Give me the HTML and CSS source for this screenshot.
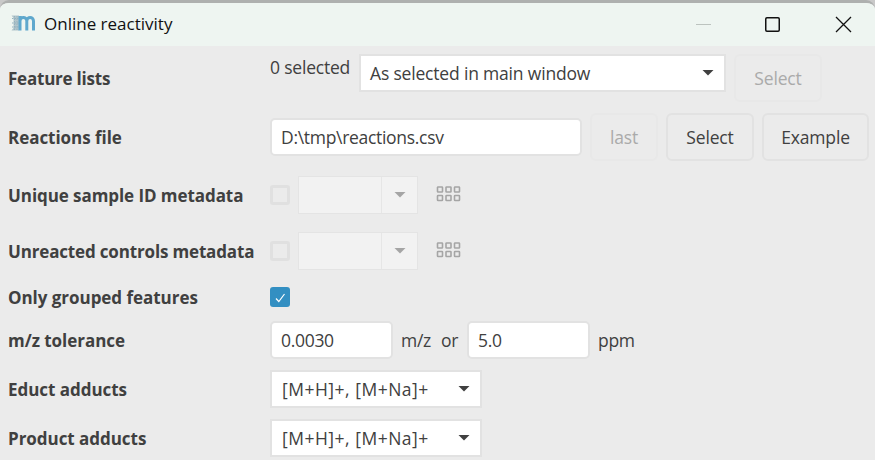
FILE: index.html
```html
<!DOCTYPE html>
<html lang="en">
<head>
<meta charset="utf-8">
<title>Online reactivity</title>
<link rel="stylesheet" href="styles.css">
</head>
<body>
<div class="window">
  <header class="titlebar">
    <svg class="logo" width="25" height="16" viewBox="0 0 25 16">
      <path d="M0.500 0.500H8V15.500H0.500L2.500 13V3Z" fill="#b2c5cb"/>
      <path d="M3.500 1v14M6 1v14M1 3.500h7M1 8h7M1 12h7" stroke="#95b2bf" stroke-width="1" stroke-dasharray="1.500 1" fill="none"/>
      <path d="M9 15.500V1M9 6C9 1.200 15.800 1.200 15.800 6V15.500M15.800 6C15.800 1.200 22.500 1.200 22.500 6V15.500" fill="none" stroke="#5fa8cd" stroke-width="3"/>
    </svg>
    <h1 class="title">Online reactivity</h1>
    <svg class="controls" width="160" height="20" viewBox="0 0 160 20" fill="none">
      <path d="M1 10.500h15" stroke="#bcc3bf"/>
      <rect x="70.750" y="3.750" width="13.500" height="13.500" rx="1.200" stroke="#111" stroke-width="1.500"/>
      <path d="M141 3l15 15M156 3L141 18" stroke="#111" stroke-width="1.300"/>
    </svg>
  </header>
  <main class="form">
    <div class="row row-lists">
      <label class="name">Feature lists</label>
      <span class="count">0 selected</span>
      <div class="combo combo-wide"><span class="t-main">As selected in main window</span><i class="arrow"></i></div>
      <button class="btn b-pick" disabled>Select</button>
    </div>
    <div class="row row-file">
      <label class="name n-loose">Reactions file</label>
      <div class="field field-file"><span class="t-file">D:\tmp\reactions.csv</span></div>
      <button class="btn b-last" disabled>last</button>
      <button class="btn b-select">Select</button>
      <button class="btn b-example">Example</button>
    </div>
    <div class="row row-sample">
      <label class="name n-sample">Unique sample ID metadata</label>
      <span class="check"></span>
      <div class="combo-off"><i class="arrow"></i></div>
      <svg class="tiles" width="25" height="16" viewBox="0 0 25 16"><g fill="none" stroke="#a5a5a5" stroke-width="1.600"><rect x="1.500" y="1" width="5" height="5" rx=".6"/><rect x="10" y="1" width="5" height="5" rx=".6"/><rect x="18.500" y="1" width="5" height="5" rx=".6"/><rect x="1.500" y="9.500" width="5" height="5" rx=".6"/><rect x="10" y="9.500" width="5" height="5" rx=".6"/><rect x="18.500" y="9.500" width="5" height="5" rx=".6"/></g></svg>
    </div>
    <div class="row row-control">
      <label class="name n-control">Unreacted controls metadata</label>
      <span class="check"></span>
      <div class="combo-off"><i class="arrow"></i></div>
      <svg class="tiles" width="25" height="16" viewBox="0 0 25 16"><g fill="none" stroke="#a5a5a5" stroke-width="1.600"><rect x="1.500" y="1" width="5" height="5" rx=".6"/><rect x="10" y="1" width="5" height="5" rx=".6"/><rect x="18.500" y="1" width="5" height="5" rx=".6"/><rect x="1.500" y="9.500" width="5" height="5" rx=".6"/><rect x="10" y="9.500" width="5" height="5" rx=".6"/><rect x="18.500" y="9.500" width="5" height="5" rx=".6"/></g></svg>
    </div>
    <div class="row row-grouped">
      <label class="name n-loose">Only grouped features</label>
      <span class="check check-on"><svg width="20" height="20" viewBox="0 0 20 20"><path d="M6 11.500l2.800 3L14.500 7" fill="none" stroke="#fff" stroke-width="1.200"/></svg></span>
    </div>
    <div class="row row-tolerance">
      <label class="name n-loose">m/z tolerance</label>
      <div class="field field-num"><span>0.0030</span></div>
      <span class="unit u-mz">m/z</span><span class="unit u-or">or</span>
      <div class="field field-num"><span>5.0</span></div>
      <span class="unit u-ppm">ppm</span>
    </div>
    <div class="row row-educt">
      <label class="name n-loose">Educt adducts</label>
      <div class="combo combo-add"><span class="t-add">[M+H]+, [M+Na]+</span><i class="arrow"></i></div>
    </div>
    <div class="row row-product">
      <label class="name n-loose">Product adducts</label>
      <div class="combo combo-add"><span class="t-add">[M+H]+, [M+Na]+</span><i class="arrow"></i></div>
    </div>
  </main>
</div>
</body>
</html>
```
FILE: styles.css
```css
* { box-sizing: border-box; }
body { margin: 0; background: #c9c9c9; color: #404040; font: 17.5px/24px "Open Sans", "Noto Sans", sans-serif; }
.window { height: 460px; overflow: hidden; border-top: 3px solid #aeb0af; border-radius: 9px 9px 0 0; background: #ebebeb; white-space: nowrap; }
.titlebar { display: flex; align-items: center; height: 43px; padding: 0 20px 0 11px; background: #eef5f1; }
.logo { margin-top: -3px; }
.title { margin: -1px auto 0 8px; font-size: 17px; font-weight: 400; color: #111; }
.controls { margin-top: -2px; }
.form { padding-top: 2px; }
.row { display: flex; align-items: center; }
.row-lists, .row-file { height: 59px; }
.row-sample { height: 58px; }
.row-control { height: 54px; }
.row-grouped { height: 38px; }
.row-tolerance { height: 48px; }
.row-educt { height: 50px; }
.row-product { height: 48px; }
.name { width: 262px; margin: 2px 0 0 8px; font-size: 17px; font-weight: 700; letter-spacing: -0.22px; }
.n-sample { letter-spacing: -0.07px; }
.n-control { letter-spacing: -0.16px; }
.n-loose { letter-spacing: -0.04px; }
.count { width: 80px; margin: -21px 9px 0 0; letter-spacing: -0.2px; }
.combo { display: flex; align-items: center; justify-content: space-between; height: 38px; padding: 0 10px; background: #fff; border: 2px solid #e2e2e2; }
.combo-wide { width: 367px; margin-top: -9px; padding-left: 9px; letter-spacing: -0.18px; }
.combo-add { width: 212px; padding: 0 10px; letter-spacing: 0.5px; }
.arrow { width: 12px; height: 6px; margin-top: -1px; background: #404040; clip-path: polygon(0 0, 100% 0, 50% 100%); }
.btn { height: 48px; margin: 0 0 0 8px; padding: 0; font: inherit; letter-spacing: -0.15px; color: #404040; background: #ebebeb; border: 2px solid #e2e2e2; border-radius: 6px; }
.btn:disabled { color: #aaa; border-color: #e8e8e8; }
.b-pick { width: 88px; }
.b-last { width: 68px; }
.b-select { width: 88px; }
.b-example { width: 107px; }
.field { display: flex; align-items: center; height: 38px; padding: 0 9px; background: #fff; border: 2px solid #e2e2e2; border-radius: 5px; }
.field-file { width: 312px; letter-spacing: -0.3px; }
.field-num { width: 123px; letter-spacing: -0.3px; }
.check { width: 20px; height: 20px; border: 3px solid #e0e0e0; border-radius: 3px; }
.check-on { border: 0; background: #338fc2; }
.check-on svg { display: block; }
.combo-off { display: flex; align-items: center; justify-content: flex-end; width: 120px; height: 38px; margin-left: 8px; padding-right: 11px; border: 1px solid #e4e4e4; background: linear-gradient(90deg, #f2f2f2 82px, #e6e6e6 82px, #e6e6e6 83px, #f2f2f2 83px); }
.combo-off .arrow { background: #a5a5a5; }
.tiles { margin: -2px 0 0 18px; }
.unit { margin-left: 8px; letter-spacing: -0.3px; }
.u-or { margin: 0 9px 0 10px; }
```
